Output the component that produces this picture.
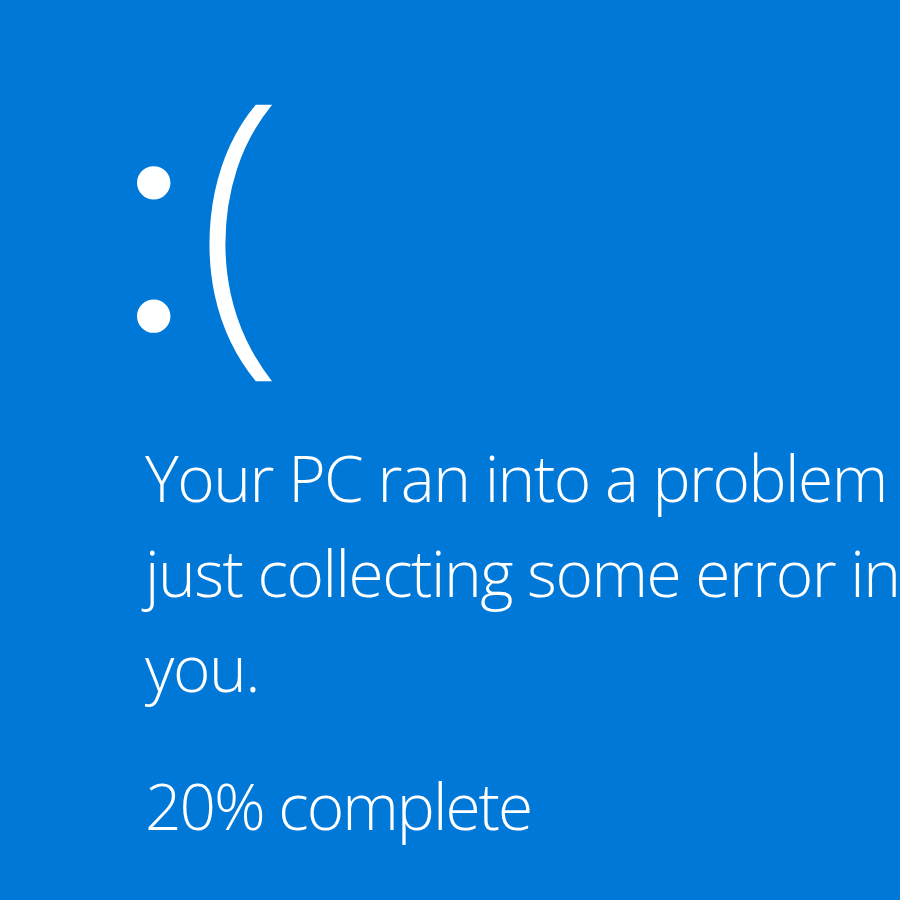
export default function App() {
  return (
    <div
      className="w-[900px] h-[900px] overflow-hidden bg-[#0078d7] text-white pl-[145px]"
      style={{ fontFamily: '"Open Sans", "Noto Sans", sans-serif' }}
    >
      <div className="pt-[50px] h-[430px] -ml-[36px] text-[317px] leading-none font-light whitespace-nowrap">
        <span className="tracking-[-2px]" style={{ fontFamily: 'Inter, sans-serif' }}>:</span>(
      </div>
      <p className="text-[64px] leading-[95px] font-light tracking-[-1.5px] whitespace-nowrap">
        Your PC ran into a problem and needs to restart. We're
        <br />
        just collecting some error info, and then we'll restart for
        <br />
        you.
      </p>
      <p className="mt-[43px] text-[64px] leading-[95px] font-light tracking-[-2px] whitespace-nowrap">
        20% complete
      </p>
    </div>
  )
}
